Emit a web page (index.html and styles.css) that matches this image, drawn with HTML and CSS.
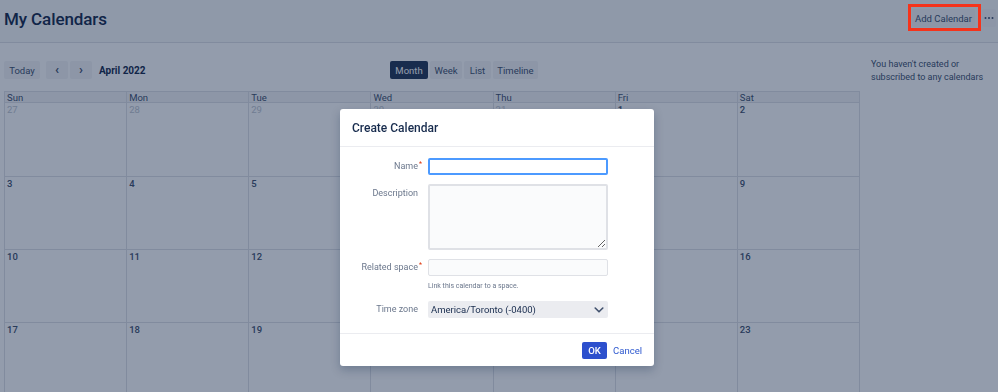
FILE: index.html
```html
<!DOCTYPE html>
<html lang="en">

<head>
  <meta charset="UTF-8" />
  <meta name="viewport" content="width=device-width, initial-scale=1.0" />
  <title>My Calendars</title>
  <link rel="stylesheet" href="styles.css">
</head>

<body>
  <div class="page">
    <div class="header">
      <h1>My Calendars</h1>
      <div class="header-actions">
        <button class="btn btn-add">Add Calendar</button>
        <button class="btn btn-more" aria-label="More">
          <svg width="10" height="4" viewBox="0 0 10 4"><circle cx="1.5" cy="2" r="1" fill="#42526e"/><circle cx="5" cy="2" r="1" fill="#42526e"/><circle cx="8.5" cy="2" r="1" fill="#42526e"/></svg>
        </button>
      </div>
    </div>

    <div class="main">
      <div class="calendar">
        <div class="toolbar">
          <div class="toolbar-left">
            <button class="btn btn-tool">Today</button>
            <div class="nav-group">
              <button class="btn btn-nav">&#8249;</button>
              <button class="btn btn-nav">&#8250;</button>
            </div>
            <span class="month-title">April 2022</span>
          </div>
          <div class="views">
            <button class="btn btn-view active">Month</button>
            <button class="btn btn-view">Week</button>
            <button class="btn btn-view">List</button>
            <button class="btn btn-view">Timeline</button>
          </div>
        </div>

        <div class="grid">
          <div class="dow">Sun</div>
          <div class="dow">Mon</div>
          <div class="dow">Tue</div>
          <div class="dow">Wed</div>
          <div class="dow">Thu</div>
          <div class="dow">Fri</div>
          <div class="dow">Sat</div>

          <div class="day other">27</div>
          <div class="day other">28</div>
          <div class="day other">29</div>
          <div class="day other">30</div>
          <div class="day other">31</div>
          <div class="day">1</div>
          <div class="day">2</div>

          <div class="day">3</div>
          <div class="day">4</div>
          <div class="day">5</div>
          <div class="day">6</div>
          <div class="day">7</div>
          <div class="day">8</div>
          <div class="day">9</div>

          <div class="day">10</div>
          <div class="day">11</div>
          <div class="day">12</div>
          <div class="day">13</div>
          <div class="day">14</div>
          <div class="day">15</div>
          <div class="day">16</div>

          <div class="day">17</div>
          <div class="day">18</div>
          <div class="day">19</div>
          <div class="day">20</div>
          <div class="day">21</div>
          <div class="day">22</div>
          <div class="day">23</div>
        </div>
      </div>

      <div class="sidebar">
        <p>You haven't created or<br>subscribed to any calendars</p>
      </div>
    </div>
  </div>

  <div class="blanket"></div>
  <div class="highlight"></div>

  <div class="dialog">
    <div class="dialog-header">
      <h2>Create Calendar</h2>
    </div>
    <form class="dialog-body">
      <label class="field-label" for="cal-name">Name<span class="req">*</span></label>
      <input class="text focus" type="text" id="cal-name" />

      <label class="field-label no-req label-top" for="cal-desc">Description</label>
      <textarea class="textarea" id="cal-desc"></textarea>

      <label class="field-label" for="cal-space">Related space<span class="req">*</span></label>
      <div class="field-stack">
        <input class="text" type="text" id="cal-space" />
        <div class="hint">Link this calendar to a space.</div>
      </div>

      <label class="field-label no-req" for="cal-tz">Time zone</label>
      <div class="select" id="cal-tz">
        <span>America/Toronto (-0400)</span>
        <svg width="10" height="6" viewBox="0 0 10 6"><path d="M1.2 1l3.8 3.8 3.8-3.8" fill="none" stroke="#42526e" stroke-width="1.6" stroke-linecap="round" stroke-linejoin="round"/></svg>
      </div>
    </form>
    <div class="dialog-footer">
      <button class="btn-primary">OK</button>
      <a class="link" href="#">Cancel</a>
    </div>
  </div>
</body>

</html>
```

FILE: styles.css
```css
body,
div,
form,
h1,
h2,
p {
  margin: 0;
  padding: 0;
}

body {
  font-family: Roboto, "Liberation Sans", sans-serif;
  color: #172b4d;
  background: #fff;
}

button {
  font-family: inherit;
  border: 0;
  cursor: pointer;
}

.btn {
  background: #f4f5f7;
  color: #42526e;
  font-size: 9.5px;
  height: 18px;
  border-radius: 2px;
  padding: 0 6px;
}

/* header */
.header {
  height: 42px;
  border-bottom: 1px solid #dfe1e6;
  display: flex;
  align-items: center;
  justify-content: space-between;
  padding: 0 2px 0 4px;
  background: #f8f9fa;
}

.header h1 {
  font-size: 17px;
  font-weight: 500;
  letter-spacing: -0.1px;
  color: #172b4d;
  margin-top: -4px;
}

.header-actions {
  display: flex;
  align-items: center;
  gap: 7px;
  margin-top: -6px;
}

.btn-add {
  width: 63px;
  padding: 0;
}

.btn-more {
  width: 14px;
  padding: 0;
  display: flex;
  align-items: center;
  justify-content: center;
}

/* main */
.main {
  display: flex;
}

.calendar {
  width: 856px;
  flex-shrink: 0;
  margin-left: 4px;
}

.toolbar {
  margin-top: 18px;
  height: 18px;
  display: flex;
  align-items: center;
}

.toolbar-left {
  display: flex;
  align-items: center;
  gap: 6px;
  width: 386px;
}

.btn-tool {
  width: 36px;
  padding: 0;
}

.nav-group {
  display: flex;
  gap: 2px;
}

.btn-nav {
  width: 22px;
  padding: 0;
  font-size: 13px;
  font-weight: 700;
  line-height: 16px;
}

.month-title {
  font-size: 10px;
  font-weight: 700;
  margin-left: 1px;
}

.views {
  display: flex;
  gap: 2px;
}

.btn-view {
  padding: 0;
}

.btn-view:nth-child(1) { width: 38px; }
.btn-view:nth-child(2) { width: 32px; }
.btn-view:nth-child(3) { width: 27px; }
.btn-view:nth-child(4) { width: 45px; }

.btn-view.active {
  background: #253858;
  color: #fff;
}

.grid {
  margin-top: 12px;
  display: grid;
  grid-template-columns: repeat(7, 1fr);
  grid-template-rows: 11px 74px 73px 73px 73px;
  border-left: 1px solid #dfe1e6;
  border-top: 1px solid #dfe1e6;
}

.dow,
.day {
  border-right: 1px solid #dfe1e6;
  border-bottom: 1px solid #dfe1e6;
  font-size: 9.5px;
  padding-left: 2px;
}

.dow {
  background: #f4f5f7;
  line-height: 11px;
  color: #42526e;
}

.day {
  font-weight: 500;
  line-height: 13px;
  color: #42526e;
}

.day.other {
  color: #c1c7d0;
  font-weight: 400;
}

.sidebar {
  margin-left: 11px;
  padding-top: 15px;
  font-size: 9px;
  line-height: 13px;
  color: #42526e;
}

/* overlay */
.blanket {
  position: fixed;
  inset: 0;
  background: rgba(9, 30, 66, 0.44);
}

.highlight {
  position: fixed;
  left: 908px;
  top: 4px;
  width: 73px;
  height: 27px;
  box-sizing: border-box;
  border: 3px solid #f5331b;
}

/* dialog */
.dialog {
  position: fixed;
  left: 340px;
  top: 109px;
  width: 314px;
  height: 257px;
  background: #fff;
  border-radius: 3px;
  box-shadow: 0 4px 10px rgba(9, 30, 66, 0.25);
  display: flex;
  flex-direction: column;
}

.dialog-header {
  height: 37px;
  border-bottom: 1px solid #ebecf0;
  display: flex;
  align-items: center;
  padding-left: 12px;
}

.dialog-header h2 {
  font-size: 12px;
  font-weight: 500;
  color: #172b4d;
}

.dialog-body {
  display: grid;
  grid-template-columns: 88px 180px;
  row-gap: 9px;
  padding: 11px 0 15px;
  border-bottom: 1px solid #ebecf0;
}

.field-label {
  font-size: 9px;
  line-height: 17px;
  color: #6b778c;
  text-align: right;
  padding-right: 6px;
}

.field-label.no-req {
  padding-right: 10px;
}

.label-top {
  line-height: 12px;
  padding-top: 3px;
}

.req {
  color: #de350b;
  font-size: 7px;
  vertical-align: top;
  line-height: 12px;
  margin-left: 1px;
}

.text {
  box-sizing: border-box;
  width: 180px;
  height: 17px;
  border: 1px solid #dfe1e6;
  background: #fafbfc;
  border-radius: 2px;
  padding: 0 4px;
  font-size: 9.5px;
  outline: none;
  display: block;
}

.text.focus {
  border: 2px solid #4c9aff;
  background: #fff;
}

.textarea {
  box-sizing: border-box;
  width: 180px;
  height: 66px;
  border: 2px solid #dfe1e6;
  background: #fafbfc;
  border-radius: 2px;
  display: block;
}

.field-stack {
  display: flex;
  flex-direction: column;
}

.hint {
  font-size: 7px;
  line-height: 9px;
  color: #6b778c;
  margin-top: 6px;
  margin-bottom: 1px;
}

.select {
  box-sizing: border-box;
  height: 17px;
  background: #ebecf0;
  border-radius: 2px;
  display: flex;
  align-items: center;
  justify-content: space-between;
  padding: 0 4px 0 3px;
  font-size: 9.5px;
  color: #172b4d;
}

.dialog-footer {
  flex: 1;
  display: flex;
  align-items: center;
  justify-content: flex-end;
  gap: 6px;
  padding-right: 12px;
}

.btn-primary {
  background: #2d50cd;
  color: #fff;
  font-size: 9.5px;
  font-weight: 500;
  width: 25px;
  height: 17px;
  border-radius: 2px;
  padding: 0;
}

.link {
  color: #2d58cf;
  font-size: 9.5px;
  text-decoration: none;
}
```
